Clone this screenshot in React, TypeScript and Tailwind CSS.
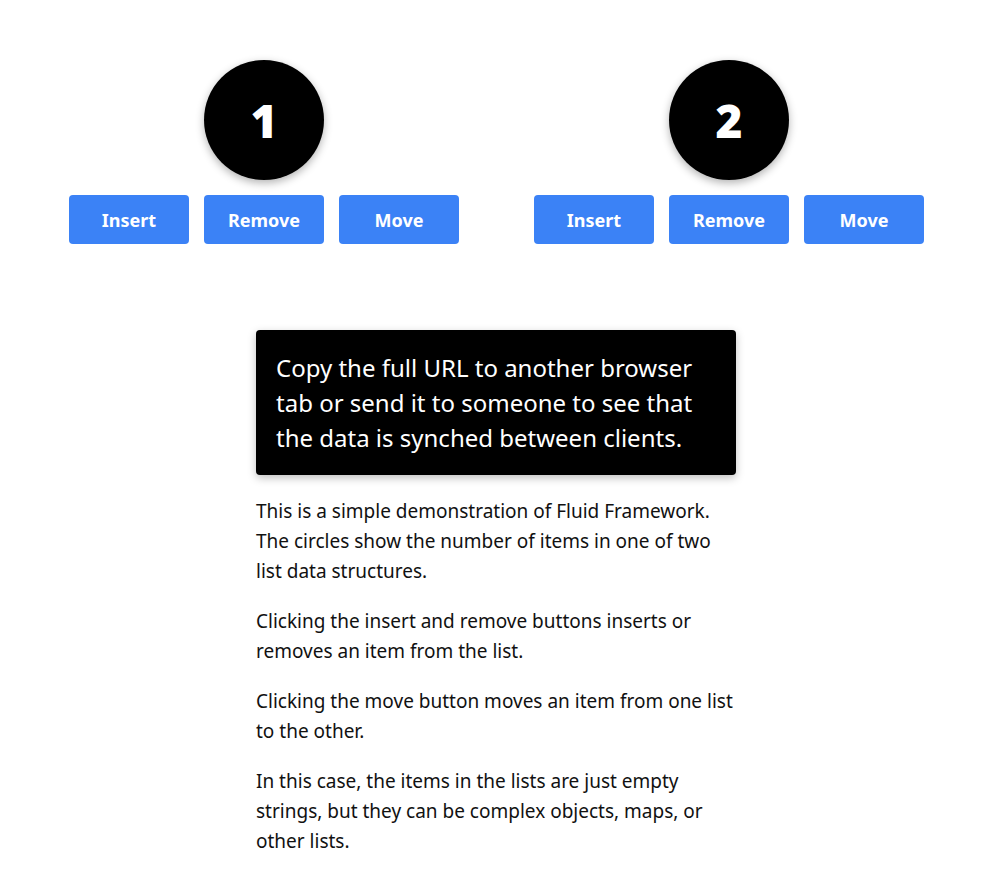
import React, { useState } from 'react';

const font = { fontFamily: "'Segoe UI', 'Noto Sans', sans-serif" };

interface ListPanelProps {
  count: number;
  onInsert: () => void;
  onRemove: () => void;
  onMove: () => void;
}

const ListPanel: React.FC<ListPanelProps> = ({ count, onInsert, onRemove, onMove }) => {
  const btn =
    'w-[120px] h-[49px] rounded bg-[#3b82f6] text-white text-lg font-bold flex items-center justify-center';
  return (
    <div className="flex flex-col items-center">
      <div className="w-[120px] h-[120px] rounded-full bg-black text-white flex items-center justify-center text-[46px] font-black shadow-[0_3px_8px_rgba(0,0,0,0.3)]">
        {count}
      </div>
      <div className="flex gap-[15px] mt-[15px]">
        <button className={btn} onClick={onInsert}>Insert</button>
        <button className={btn} onClick={onRemove}>Remove</button>
        <button className={btn} onClick={onMove}>Move</button>
      </div>
    </div>
  );
};

export default function App() {
  const [a, setA] = useState(1);
  const [b, setB] = useState(2);

  return (
    <div className="bg-white min-h-screen text-[#111]" style={font}>
      <div className="flex pt-[60px] pl-[69px] gap-[75px]">
        <ListPanel
          count={a}
          onInsert={() => setA(a + 1)}
          onRemove={() => setA(Math.max(0, a - 1))}
          onMove={() => { if (a > 0) { setA(a - 1); setB(b + 1); } }}
        />
        <ListPanel
          count={b}
          onInsert={() => setB(b + 1)}
          onRemove={() => setB(Math.max(0, b - 1))}
          onMove={() => { if (b > 0) { setB(b - 1); setA(a + 1); } }}
        />
      </div>

      <div className="w-[480px] ml-[256px] mt-[86px]">
        <div className="bg-black text-white rounded px-5 py-5 text-2xl leading-[35px] shadow-[0_3px_8px_rgba(0,0,0,0.25)]">
          Copy the full URL to another browser tab or send it to someone to see that the data is synched between clients.
        </div>
        <div className="mt-[21px] flex flex-col gap-5 text-[19px] leading-[30px]">
          <p>
            This is a simple demonstration of Fluid Framework. The circles show the number of items in one of two list data structures.
          </p>
          <p>Clicking the insert and remove buttons inserts or removes an item from the list.</p>
          <p>Clicking the move button moves an item from one list to the other.</p>
          <p>
            In this case, the items in the lists are just empty strings, but they can be complex objects, maps, or other lists.
          </p>
        </div>
      </div>
    </div>
  );
}
